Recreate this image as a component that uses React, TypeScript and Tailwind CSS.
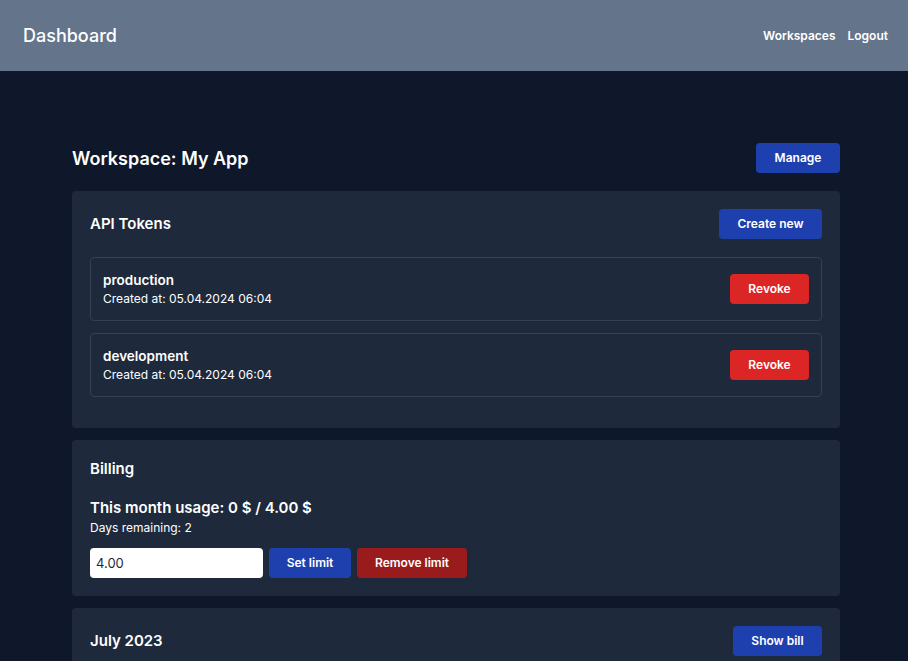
import React, { useState } from "react";

const tokens = [
  { name: "production", created: "05.04.2024 06:04" },
  { name: "development", created: "05.04.2024 06:04" },
];

export default function App() {
  const [limit, setLimit] = useState("4.00");

  return (
    <div className="min-h-screen bg-[#0f172a] text-white font-['Inter',sans-serif]">
      <header className="h-[71px] bg-[#64748b] flex items-center justify-between pl-[23px] pr-[20px]">
        <h1 className="text-[18px] font-medium">Dashboard</h1>
        <nav className="flex items-center gap-3 text-[12px] font-semibold">
          <a href="#">Workspaces</a>
          <a href="#">Logout</a>
        </nav>
      </header>

      <main className="w-[768px] ml-[72px] pt-[72px] pb-10">
        <div className="flex items-center justify-between mb-[18px]">
          <h2 className="text-[18px] font-semibold">Workspace: My App</h2>
          <button className="h-[30px] w-[84px] rounded-sm bg-[#1e40af] text-[12px] font-semibold">
            Manage
          </button>
        </div>

        <section className="bg-[#1e293b] rounded p-[18px] pb-[31px] mb-3">
          <div className="flex items-center justify-between mb-[18px]">
            <h3 className="text-[15px] font-semibold">API Tokens</h3>
            <button className="h-[30px] w-[103px] rounded-sm bg-[#1e40af] text-[12px] font-semibold">
              Create new
            </button>
          </div>
          <div className="flex flex-col gap-3">
            {tokens.map((t) => (
              <div
                key={t.name}
                className="h-[64px] border border-[#334155] rounded flex items-center justify-between pl-3 pr-3"
              >
                <div className="flex flex-col">
                  <span className="text-[13.5px] font-semibold leading-[20px]">{t.name}</span>
                  <span className="text-[12px] leading-[18px]">Created at: {t.created}</span>
                </div>
                <button className="h-[30px] w-[79px] rounded-sm bg-[#dc2626] text-[12px] font-semibold">
                  Revoke
                </button>
              </div>
            ))}
          </div>
        </section>

        <section className="bg-[#1e293b] rounded p-[18px] mb-3">
          <h3 className="text-[15px] font-semibold leading-[20px] mt-[1px]">Billing</h3>
          <p className="text-[15px] font-semibold leading-[22px] mt-[18px]">
            This month usage: 0 $ / 4.00 $
          </p>
          <p className="text-[12px] leading-[18px]">Days remaining: 2</p>
          <div className="flex items-center gap-[6px] mt-[11px]">
            <input
              value={limit}
              onChange={(e) => setLimit(e.target.value)}
              className="h-[30px] w-[173px] rounded-sm bg-white text-[#1f2937] text-[13px] px-[6px] outline-none"
            />
            <button className="h-[30px] w-[82px] rounded-sm bg-[#1e40af] text-[12px] font-semibold">
              Set limit
            </button>
            <button className="h-[30px] w-[110px] rounded-sm bg-[#991b1b] text-[12px] font-semibold">
              Remove limit
            </button>
          </div>
        </section>

        <section className="bg-[#1e293b] rounded p-[18px]">
          <div className="flex items-center justify-between">
            <h3 className="text-[15px] font-semibold">July 2023</h3>
            <button className="h-[30px] w-[89px] rounded-sm bg-[#1e40af] text-[12px] font-semibold">
              Show bill
            </button>
          </div>
          <div className="h-[60px]" />
        </section>
      </main>
    </div>
  );
}
